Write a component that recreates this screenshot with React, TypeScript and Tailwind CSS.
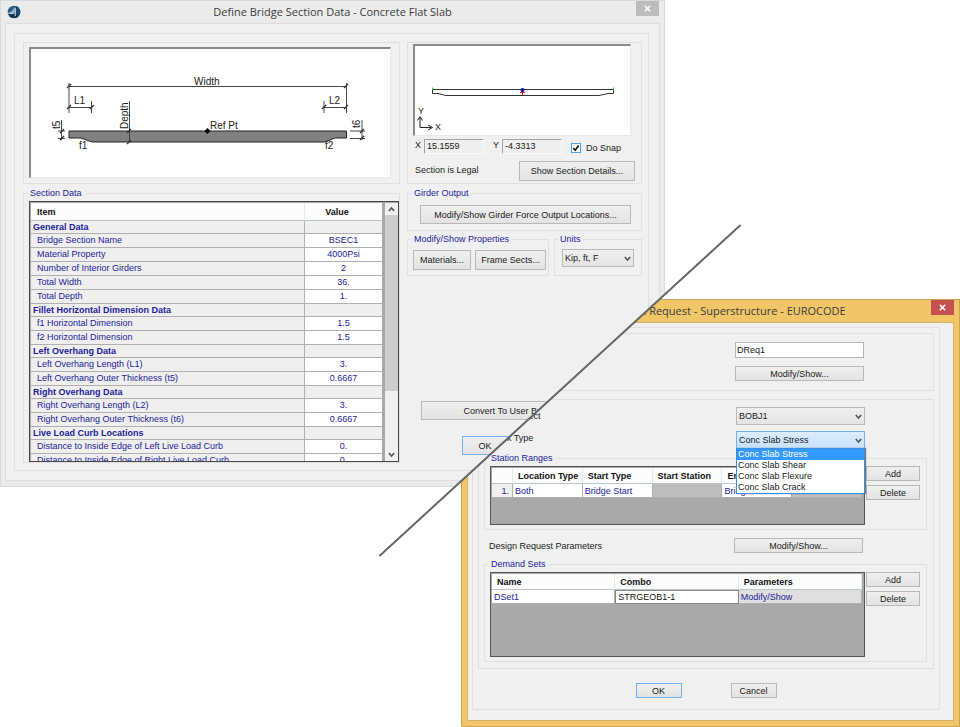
import React from "react";

type ButtonProps = React.ButtonHTMLAttributes<HTMLButtonElement> & { focused?: boolean };

function Button({ focused, className = "", ...rest }: ButtonProps) {
  const edge = focused ? "border-[#6fb1f5]" : "border-[#b9b9b9]";
  return (
    <button
      type="button"
      className={`shrink-0 whitespace-nowrap border bg-linear-to-b from-[#efefef] to-[#e3e3e3] text-center ${edge} ${className}`}
      {...rest}
    />
  );
}

function Chevron({ up = false }: { up?: boolean }) {
  return (
    <svg className="size-[7px]" viewBox="0 0 7 7" fill="none" stroke="#555" strokeWidth="1.6">
      <path d={up ? "M0.8 5 L3.5 2 L6.2 5" : "M0.8 2 L3.5 5 L6.2 2"} />
    </svg>
  );
}

function Select({ id, label, value, open }: { id: string; label?: string; value: string; open?: boolean }) {
  const look = open
    ? "border-[#6fb1f5] from-[#dcedfd] to-[#c6e1fa]"
    : "border-[#b9b9b9] from-[#efefef] to-[#e4e4e4]";
  return (
    <div className="relative h-full">
      <select
        id={id}
        aria-label={label}
        className={`block h-full w-full appearance-none border bg-linear-to-b pl-[2px] ${look}`}
      >
        <option>{value}</option>
      </select>
      <div className="pointer-events-none absolute inset-y-0 right-[3px] flex items-center">
        <Chevron />
      </div>
    </div>
  );
}

function Group({ title, className = "", children }: { title: string; className?: string; children: React.ReactNode }) {
  return (
    <fieldset className={`min-w-0 border border-[#e0e0e0] ${className}`}>
      <legend className="h-[10px] px-[2px] leading-[10px] text-[#1c1c9c]">{title}</legend>
      {children}
    </fieldset>
  );
}

function AppIcon() {
  return (
    <svg className="size-[14px]" viewBox="0 0 14 14">
      <circle cx="7" cy="7" r="6.3" fill="#2b5f7d" />
      <path d="M9 1 A6.3 6.3 0 0 1 12.6 9.800 L9 9.500 Z" fill="#1d4a68" />
      <path d="M1.200 9.200 Q7 8.600 12.800 9.200 A6.3 6.3 0 0 1 1.200 9.200 Z" fill="#143a56" />
      <path d="M7.600 2 L7.600 8 L2.400 8 Q5.800 5.800 7.600 2 Z" fill="#8fb4c6" />
      <path d="M1.200 8.200 L6.500 8.600 M8.300 3 L8.300 11" fill="none" stroke="#dcecf2" strokeWidth="0.9" />
    </svg>
  );
}

function TitleBar({ title, icon, closeColor }: { title: string; icon?: React.ReactNode; closeColor: string }) {
  return (
    <header className="grid h-[22px] grid-cols-[40px_1fr_40px]">
      <div className="pt-[4px] pl-[6px]">{icon}</div>
      <h1 className="text-center font-['Open_Sans',sans-serif] text-[11px] leading-[22px] whitespace-nowrap text-[#3c3c3c]">
        {title}
      </h1>
      <button
        type="button"
        aria-label="Close"
        className={`mr-[5px] flex h-[15px] w-[23px] items-center justify-center justify-self-end ${closeColor}`}
      >
        <svg className="size-[7px]" viewBox="0 0 7 7" stroke="#fff" strokeWidth="1.5">
          <path d="M0.8 0.8 L6.2 6.2 M6.2 0.8 L0.8 6.2" />
        </svg>
      </button>
    </header>
  );
}

const canvasFrame =
  "block border-t-2 border-l-2 border-r border-b border-t-[#8a8a8a] border-l-[#8a8a8a] border-r-[#e8e8e8] border-b-[#e8e8e8] bg-white";

function SectionDiagram() {
  const tick = (x: number, y: number) => <path key={`${x}-${y}`} d={`M${x - 2} ${y + 2} L${x + 2} ${y - 2}`} strokeWidth="1.2" />;
  return (
    <svg
      className={`h-[131px] w-full font-['Liberation_Sans',Arial,sans-serif] text-[10px] ${canvasFrame}`}
      viewBox="31 49 359 128"
      role="img"
      aria-label="Flat slab section dimensions"
    >
      <path
        d="M69 131 H346.500 V138 H335 L325 142 H92 L81 138 H69 Z"
        fill="#808080"
        stroke="#222"
      />
      <g fill="none" stroke="#333" strokeWidth="0.9">
        <path d="M69 86.500 H346.500 M69 83 V113 M346.500 83 V113" />
        <path d="M69 107.500 H92 M91.500 101 V113 M324 107.500 H346.500 M324 101 V113" />
        <path d="M129.500 101 V143" />
        <path d="M61.500 120 V140 M58 131 H65 M58 138.500 H65" />
        <path d="M362 120 V140 M350 131 H365 M350 138.500 H365" />
        {tick(69, 86)}
        {tick(346, 86)}
        {tick(69, 107)}
        {tick(92, 107)}
        {tick(324, 107)}
        {tick(346, 107)}
        {tick(129, 131)}
        {tick(129, 142)}
        {tick(62, 131)}
        {tick(62, 138)}
        {tick(362, 131)}
        {tick(362, 138)}
      </g>
      <path d="M207.500 128 L210.500 131 L207.500 134 L204.500 131 Z" fill="#000" />
      <g fill="#222">
        <text x="194" y="85">Width</text>
        <text x="74" y="104">L1</text>
        <text x="329" y="104">L2</text>
        <text x="210" y="129">Ref Pt</text>
        <text x="79" y="149">f1</text>
        <text x="325" y="149">f2</text>
        <text transform="translate(128 129) rotate(-90)">Depth</text>
        <text transform="translate(60 129) rotate(-90)">t5</text>
        <text transform="translate(360 128) rotate(-90)">t6</text>
      </g>
    </svg>
  );
}

function SectionPreview() {
  return (
    <svg
      className={`h-[92px] w-full font-['Liberation_Sans',Arial,sans-serif] text-[9px] ${canvasFrame}`}
      viewBox="415 46 215 89"
      role="img"
      aria-label="Section preview"
    >
      <path d="M432.500 89.500 H613.500 V93.500 L608 93.500 L599 95.500 H446 L438 93.500 H432.500 Z" fill="#fff" stroke="#333" />
      <path d="M432.500 87.500 V90 M613.500 87.500 V90" stroke="#1fe01f" />
      <path d="M522.500 91 V95.500 M520 92.500 H525" stroke="#f01818" />
      <circle cx="522.5" cy="90" r="2" fill="#0a0ab0" />
      <path d="M420 117 V127.500 H431 M417.500 120.500 L420 116.500 L422.500 120.500 M428 125 L432.500 127.500 L428 130" fill="none" stroke="#222" />
      <text x="418" y="114" fill="#222">Y</text>
      <text x="435" y="130" fill="#222">X</text>
    </svg>
  );
}

const sectionRows: { name: string; value?: string }[] = [
  { name: "General Data" },
  { name: "Bridge Section Name", value: "BSEC1" },
  { name: "Material Property", value: "4000Psi" },
  { name: "Number of Interior Girders", value: "2" },
  { name: "Total Width", value: "36." },
  { name: "Total Depth", value: "1." },
  { name: "Fillet Horizontal Dimension Data" },
  { name: "f1 Horizontal Dimension", value: "1.5" },
  { name: "f2 Horizontal Dimension", value: "1.5" },
  { name: "Left Overhang Data" },
  { name: "Left Overhang Length (L1)", value: "3." },
  { name: "Left Overhang Outer Thickness (t5)", value: "0.6667" },
  { name: "Right Overhang Data" },
  { name: "Right Overhang Length (L2)", value: "3." },
  { name: "Right Overhang Outer Thickness (t6)", value: "0.6667" },
  { name: "Live Load Curb Locations" },
  { name: "Distance to Inside Edge of Left Live Load Curb", value: "0." },
  { name: "Distance to Inside Edge of Right Live Load Curb", value: "0." },
];

function SectionTable() {
  return (
    <div className="mt-[3px] ml-[5px] flex h-[261px] overflow-hidden border border-[#484848] bg-[#a9a9a9] pt-px pl-px">
      <div className="min-w-0 flex-1 overflow-hidden">
        <table className="w-full table-fixed border-separate border-spacing-0 text-[#1c1c9c]">
          <colgroup>
            <col />
            <col className="w-[77px]" />
          </colgroup>
          <thead>
            <tr className="h-[18px] bg-[#fcfcfc] text-[#111]">
              <th className="border-r border-b border-r-[#e0ebf5] border-b-[#b8c4cc] p-0 pl-[6px] text-left">Item</th>
              <th className="border-b border-[#b8c4cc] p-0 pr-[13px]">Value</th>
            </tr>
          </thead>
          <tbody>
            {sectionRows.map((row) =>
              row.value === undefined ? (
                <tr key={row.name} className="h-[13px] bg-[#efefef]">
                  <th className="border-r border-b border-[#b0b0b0] p-0 pl-[2px] text-left leading-[12px]">{row.name}</th>
                  <td className="border-b border-[#b0b0b0] p-0" />
                </tr>
              ) : (
                <tr key={row.name} className="h-[14px]">
                  <td className="border-r border-b border-[#b0b0b0] bg-[#efefef] p-0 pl-[6px] leading-[13px]">{row.name}</td>
                  <td className="border-b border-[#b0b0b0] bg-white p-0 text-center leading-[13px]">{row.value}</td>
                </tr>
              ),
            )}
          </tbody>
        </table>
      </div>
      <div className="ml-[3px] flex w-[13px] flex-col items-center bg-[#f0f0f0]">
        <div className="flex h-[12px] items-center">
          <Chevron up />
        </div>
        <div className="h-[176px] w-full bg-[#cdcdcd]" />
        <div className="mt-auto flex h-[13px] items-center">
          <Chevron />
        </div>
      </div>
    </div>
  );
}

function Coordinate({ id, name, value }: { id: string; name: string; value: string }) {
  return (
    <div className="flex h-full">
      <label htmlFor={id} className="w-[9px] leading-[13px]">
        {name}
      </label>
      <input
        id={id}
        readOnly
        defaultValue={value}
        className="h-full w-[60px] border border-t-[#a5a5a5] border-r-[#fafafa] border-b-[#fafafa] border-l-[#a5a5a5] bg-[#efefef] pb-[2px] pl-[2px]"
      />
    </div>
  );
}

function SectionWindow() {
  return (
    <section className="absolute top-0 left-0 w-[665px] border border-[#dadada] bg-[#ebebeb] pb-[5px] [clip-path:polygon(0_0,100%_0,100%_294px,454px_100%,0_100%)]">
      <TitleBar title="Define Bridge Section Data - Concrete Flat Slab" icon={<AppIcon />} closeColor="bg-[#bcbcbc]" />
      <div className="mx-[4px] border border-[#dedede] bg-[#f0f0f0] pt-[9px] pr-[10px] pb-[9px] pl-[8px]">
        <div className="flex gap-[7px] border border-[#e0e0e0] pt-[8px] pr-[6px] pb-[7px] pl-[8px]">
          <div className="w-[377px] shrink-0">
            <div className="border border-[#e0e0e0] pt-[4px] pr-[8px] pb-[5px] pl-[5px]">
              <SectionDiagram />
            </div>
            <Group title="Section Data" className="mt-[4px] [&>legend]:ml-[4px]">
              <SectionTable />
            </Group>
          </div>

          <div className="flex min-w-0 flex-1 flex-col">
            <div className="border border-[#e0e0e0] pt-px pb-[2px] pl-[5px]">
              <div className="pr-[10px]">
                <SectionPreview />
              </div>
              <div className="mt-[3px] ml-[2px] flex h-[15px] gap-[9px]">
                <Coordinate id="coord-x" name="X" value="15.1559" />
                <Coordinate id="coord-y" name="Y" value="-4.3313" />
                <label className="mt-[2px] flex items-center gap-[5px]">
                  <span className="relative flex">
                    <input type="checkbox" defaultChecked className="size-[10px] appearance-none border border-[#4c9ff0] bg-white" />
                    <svg className="pointer-events-none absolute inset-0 size-[10px]" viewBox="0 0 10 10" fill="none" stroke="#111" strokeWidth="1.6">
                      <path d="M2.300 5 L4.200 7.300 L7.700 2.500" />
                    </svg>
                  </span>
                  Do Snap
                </label>
              </div>
              <div className="mt-[7px] mr-[6px] ml-[2px] flex h-[20px] justify-between">
                <span className="leading-[18px]">Section is Legal</span>
                <Button className="w-[116px]">Show Section Details...</Button>
              </div>
            </div>

            <Group title="Girder Output" className="mt-[4px] pr-[10px] pb-[6px] pl-[12px] [&>legend]:-ml-[8px]">
              <Button className="mt-[7px] block h-[19px] w-full">Modify/Show Girder Force Output Locations...</Button>
            </Group>

            <div className="mt-[3px] flex gap-[5px]">
              <Group title="Modify/Show Properties" className="w-[142px] pb-[5px] pl-[5px] [&>legend]:-ml-[1px]">
                <div className="mt-[6px] flex h-[20px] gap-[4px]">
                  <Button className="w-[58px]">Materials...</Button>
                  <Button className="w-[71px]">Frame Sects...</Button>
                </div>
              </Group>
              <Group title="Units" className="flex-1 pr-[7px] pl-[7px] [&>legend]:-ml-[4px]">
                <div className="mt-[5px] h-[18px]">
                  <Select id="units" label="Units" value="Kip, ft, F" />
                </div>
              </Group>
            </div>

            <div className="mt-auto flex flex-col items-start gap-[16px] pb-[8px] pl-[14px]">
              <Button className="h-[19px] w-[211px]">Convert To User Bridge Section</Button>
              <Button focused className="ml-[41px] h-[19px] w-[46px]">
                OK
              </Button>
            </div>
          </div>
        </div>
      </div>
    </section>
  );
}

const headCell = "border-r border-b border-r-[#e0ebf5] border-b-[#b8c4cc] p-0 pl-[5px] text-left whitespace-nowrap";
const gridCell = "border-r border-b border-[#b0b0b0] p-0 pl-[2px] whitespace-nowrap";

function StationTable() {
  return (
    <div className="h-[59px] min-w-0 flex-1 border border-[#555] bg-[#a9a9a9] pt-px pr-[2px] pl-px">
      <table className="w-full table-fixed border-separate border-spacing-0 text-[#1c1c9c]">
        <colgroup>
          <col className="w-[21px]" />
          <col />
          <col />
          <col />
          <col />
          <col />
        </colgroup>
        <thead>
          <tr className="h-[16px] bg-[#fcfcfc] text-[#111]">
            <th className={headCell} />
            <th className={headCell}>Location Type</th>
            <th className={headCell}>Start Type</th>
            <th className={headCell}>Start Station</th>
            <th className={headCell}>End Type</th>
            <th className={headCell}>End Station</th>
          </tr>
        </thead>
        <tbody>
          <tr className="h-[14px]">
            <td className="border-r border-b border-[#b0b0b0] bg-[#efefef] p-0 pr-[3px] text-right">1.</td>
            <td className={`bg-white ${gridCell}`}>Both</td>
            <td className={`bg-white ${gridCell}`}>Bridge Start</td>
            <td className={`bg-[#bdbdbd] ${gridCell}`} />
            <td className={`bg-white ${gridCell}`}>Bridge End</td>
            <td className={`bg-[#bdbdbd] ${gridCell}`} />
          </tr>
        </tbody>
      </table>
    </div>
  );
}

function DemandTable() {
  return (
    <div className="h-[85px] min-w-0 flex-1 border border-[#555] bg-[#a9a9a9] pt-px pr-[2px] pl-px">
      <table className="w-full table-fixed border-separate border-spacing-0 text-[#1c1c9c]">
        <thead>
          <tr className="h-[16px] bg-[#fcfcfc] text-[#111]">
            <th className={headCell}>Name</th>
            <th className={headCell}>Combo</th>
            <th className={headCell}>Parameters</th>
          </tr>
        </thead>
        <tbody>
          <tr className="h-[14px]">
            <td className={`bg-white ${gridCell}`}>DSet1</td>
            <td className="border border-[#888] bg-white p-0 pl-[2px] text-[#111]">STRGEOB1-1</td>
            <td className={`bg-[#dfdfdf] ${gridCell}`}>Modify/Show</td>
          </tr>
        </tbody>
      </table>
    </div>
  );
}

function TableActions() {
  return (
    <div className="flex w-[54px] flex-col gap-[4px]">
      <Button className="h-[15px]">Add</Button>
      <Button className="h-[15px]">Delete</Button>
    </div>
  );
}

const checkTypes = ["Conc Slab Stress", "Conc Slab Shear", "Conc Slab Flexure", "Conc Slab Crack"];

function RequestWindow() {
  return (
    <section className="absolute top-[299px] left-[461px] w-[499px] border border-[#c9a557] bg-[#f0c668] pb-[5px] [clip-path:polygon(198px_0,100%_0,100%_100%,0_100%,0_182px)]">
      <TitleBar title="Bridge Design Request - Superstructure - EUROCODE" closeColor="bg-[#c75050]" />
      <div className="mx-[5px] border border-[#d5b36a] bg-[#f0f0f0] pt-[4px] pr-[13px] pb-[10px] pl-[4px]">
        <div className="border border-[#e0e0e0] px-[5px] pt-[5px] pb-[11px]">
          <div className="flex flex-col items-end gap-[8px] border border-[#e0e0e0] pt-[8px] pr-[69px] pb-[9px]">
            <input
              aria-label="Design Request Name"
              defaultValue="DReq1"
              className="h-[16px] w-[129px] border border-[#b5b5b5] bg-white pl-px"
            />
            <Button className="h-[15px] w-[129px]">Modify/Show...</Button>
          </div>

          <div className="mt-[8px] border border-[#e0e0e0] pt-[7px] pr-[6px] pb-[6px] pl-[5px]">
            <div className="flex flex-col gap-[6px] pr-[62px] pl-[2px]">
              <div className="flex h-[18px] justify-between">
                <label htmlFor="bridge-object" className="leading-[18px]">
                  Bridge Object
                </label>
                <div className="w-[129px]">
                  <Select id="bridge-object" value="BOBJ1" />
                </div>
              </div>
              <div className="flex h-[18px] justify-between">
                <label htmlFor="check-type" className="leading-[14px]">
                  Check Type
                </label>
                <div className="relative w-[129px]">
                  <Select id="check-type" value="Conc Slab Stress" open />
                  <ul
                    role="listbox"
                    aria-label="Check Type"
                    className="absolute top-[17px] right-0 left-0 z-10 border border-[#3c8ee0] bg-white leading-[11px] shadow-[1px_0px_1px_#777]"
                  >
                    {checkTypes.map((type, i) => (
                      <li
                        key={type}
                        role="option"
                        aria-selected={i === 0}
                        className={i === 0 ? "bg-[#3399ff] pl-px text-white" : "pl-px"}
                      >
                        {type}
                      </li>
                    ))}
                  </ul>
                </div>
              </div>
            </div>

            <Group title="Station Ranges" className="mt-[4px] pr-[6px] pb-[4px] pl-[5px] [&>legend]:-ml-[1px]">
              <div className="mt-[3px] flex gap-px">
                <StationTable />
                <TableActions />
              </div>
            </Group>

            <div className="mt-[8px] flex h-[15px] justify-between pr-[64px] pl-[5px]">
              <span className="leading-[16px]">Design Request Parameters</span>
              <Button className="w-[129px]">Modify/Show...</Button>
            </div>

            <Group title="Demand Sets" className="mt-[6px] pr-[6px] pb-[4px] pl-[5px] [&>legend]:-ml-[1px]">
              <div className="mt-[3px] flex gap-px">
                <DemandTable />
                <TableActions />
              </div>
            </Group>
          </div>

          <div className="mt-[14px] flex justify-center gap-[49px]">
            <Button focused className="h-[15px] w-[46px]">
              OK
            </Button>
            <Button className="h-[15px] w-[46px]">Cancel</Button>
          </div>
        </div>
      </div>
    </section>
  );
}

export default function App() {
  return (
    <main className="relative min-h-screen overflow-hidden bg-white font-['Liberation_Sans',Arial,sans-serif] text-[9px] leading-[12px] text-[#1a1a1a]">
      <SectionWindow />
      <RequestWindow />
      <svg className="pointer-events-none absolute top-[224px] left-[379px] h-[333px] w-[363px]" viewBox="0 0 363 333" aria-hidden="true">
        <path d="M1 331.500 L361 1.500" stroke="#666" strokeWidth="2" strokeLinecap="round" />
      </svg>
    </main>
  );
}
